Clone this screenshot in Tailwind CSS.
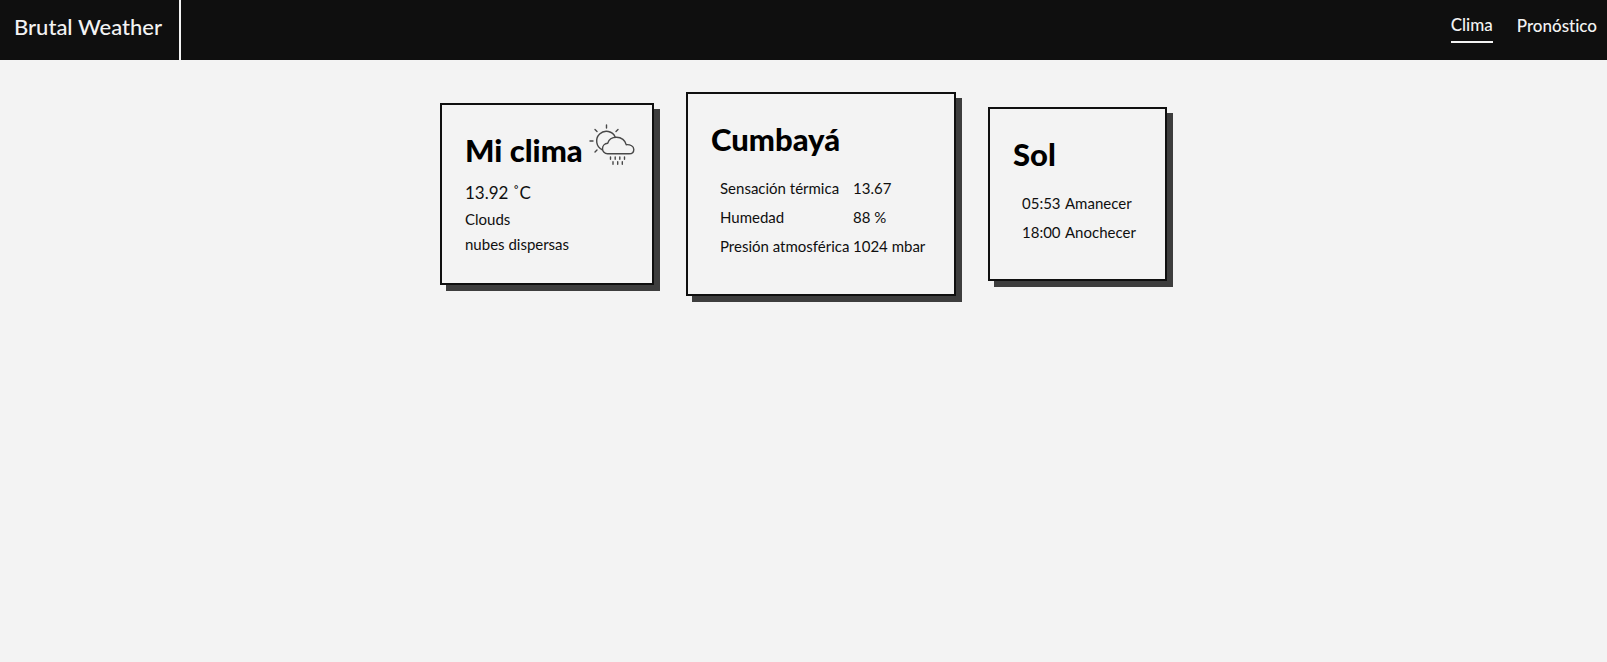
<!DOCTYPE html>
<html lang="es">
<head>
<meta charset="utf-8">
<meta name="viewport" content="width=device-width, initial-scale=1">
<title>Brutal Weather</title>
<script src="https://cdn.jsdelivr.net/npm/@tailwindcss/browser@4"></script>
</head>
<body class="min-h-screen bg-[#f3f3f3] font-['Lato',sans-serif] text-[15px] text-[#0f0f0f] [font-variant-ligatures:none]">
<header class="flex h-15 items-stretch justify-between bg-[#0f0f0f] text-[#f3f3f3]">
  <a href="#" class="flex items-center border-r-2 border-[#f3f3f3] pr-[17px] pb-2 pl-3.5 text-[22px] font-medium">Brutal Weather</a>
  <nav class="flex items-center gap-6 pr-2.5 pb-1 text-[17px] font-medium">
    <a href="#clima" class="border-b-2 border-[#f3f3f3] pb-1 leading-6">Clima</a>
    <a href="#pronostico" class="pb-1 leading-6">Pronóstico</a>
  </nav>
</header>
<main class="flex flex-wrap items-center justify-center gap-8 pt-8">
  <section class="w-[214px] border-2 border-[#0f0f0f] px-[23px] pt-[25px] pb-[26px] shadow-[6px_6px_0_#3d3d3d]">
    <div class="flex items-start">
      <h1 class="text-[31px] leading-10 font-black whitespace-nowrap text-black">Mi clima</h1>
      <svg class="-mt-1.5 -mr-1.5 ml-auto h-[44px] w-[46px] shrink-0" viewBox="0 0 46 44" fill="none" stroke="#484848" stroke-width="1.4" stroke-linecap="round" stroke-linejoin="round" aria-hidden="true">
        <path d="M17.500 1v3M6 5.500l2 2M29 5.500l-2 2M1 17h3M6 28l2-2"/>
        <path d="M13.300 25.800A9.700 9.700 0 1 1 26.300 13.200"/>
        <path d="M18.500 29.700a5 5 0 0 1-5-5c0-3 2.200-5.200 5.200-5.400 1-3.500 4.500-6 8.800-6 5 0 8.800 3.200 9.700 7.400 4.200-.3 7.600 1.500 7.600 4.700 0 2.600-2 4.300-4.600 4.300z"/>
        <path d="M21.500 33v2.300M26.200 33v2.300M30.800 33v2.300M35.500 33v2.300M24 37.800v2.400M28.700 37.800v2.400M33.300 37.800v2.400"/>
      </svg>
    </div>
    <p class="mt-2 text-[17px] leading-[29px]">13.92 ˚C</p>
    <p class="leading-[25px]">Clouds</p>
    <p class="leading-[25px]">nubes dispersas</p>
  </section>
  <section class="w-[270px] border-2 border-[#0f0f0f] px-[23px] pt-[25px] pb-[33px] shadow-[6px_6px_0_#3d3d3d]">
    <h2 class="text-[31px] leading-10 font-black text-black">Cumbayá</h2>
    <table class="mt-[15px] ml-[9px] border-collapse leading-[29px] whitespace-nowrap">
      <tr><td class="w-[133px] p-0">Sensación térmica</td><td class="p-0">13.67</td></tr>
      <tr><td class="p-0">Humedad</td><td class="p-0">88 %</td></tr>
      <tr><td class="p-0">Presión atmosférica</td><td class="p-0">1024 mbar</td></tr>
    </table>
  </section>
  <section class="w-[179px] border-2 border-[#0f0f0f] px-[23px] pt-[25px] pb-8 shadow-[6px_6px_0_#3d3d3d]">
    <h2 class="text-[31px] leading-10 font-black text-black">Sol</h2>
    <table class="mt-[15px] ml-[9px] border-collapse leading-[29px] whitespace-nowrap">
      <tr><td class="w-[43px] p-0">05:53</td><td class="p-0">Amanecer</td></tr>
      <tr><td class="p-0">18:00</td><td class="p-0">Anochecer</td></tr>
    </table>
  </section>
</main>
</body>
</html>
